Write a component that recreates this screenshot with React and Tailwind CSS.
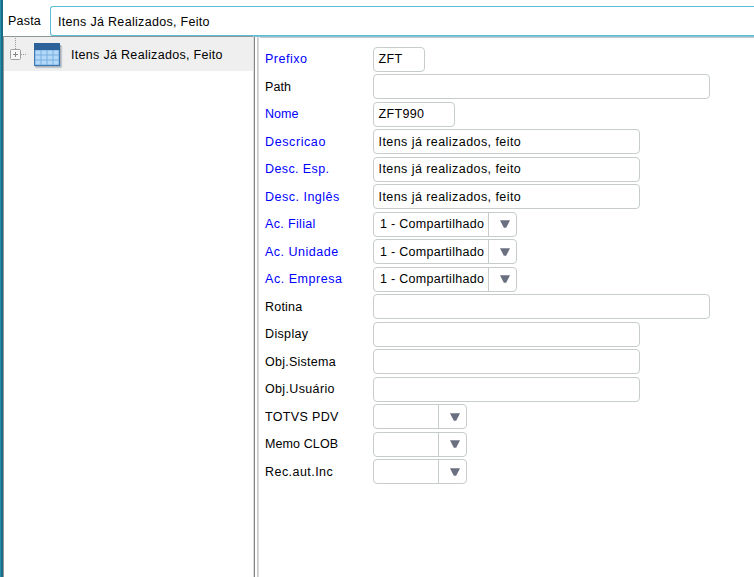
import React from 'react';

const rows = [
  { label: 'Prefixo', blue: true, width: 'w-[52px]', value: 'ZFT', tracking: 'tracking-[0.5px]', valueTracking: 'tracking-[0.4px]' },
  { label: 'Path', width: 'w-[337px]', tracking: 'tracking-[0.1px]' },
  { label: 'Nome', blue: true, width: 'w-[82px]', value: 'ZFT990', tracking: 'tracking-[0px]', valueTracking: 'tracking-[0.35px]' },
  { label: 'Descricao', blue: true, width: 'w-[267px]', value: 'Itens já realizados, feito', tracking: 'tracking-[0.6px]', valueTracking: 'tracking-[0.44px]' },
  { label: 'Desc. Esp.', blue: true, width: 'w-[267px]', value: 'Itens já realizados, feito', tracking: 'tracking-[0.4px]', valueTracking: 'tracking-[0.44px]' },
  { label: 'Desc. Inglês', blue: true, width: 'w-[267px]', value: 'Itens já realizados, feito', tracking: 'tracking-[0.5px]', valueTracking: 'tracking-[0.44px]' },
  { label: 'Ac. Filial', blue: true, width: 'w-[144px]', value: '1 - Compartilhado', select: true, tracking: 'tracking-[0.35px]', valueTracking: 'tracking-[0.28px]' },
  { label: 'Ac. Unidade', blue: true, width: 'w-[144px]', value: '1 - Compartilhado', select: true, tracking: 'tracking-[0.5px]', valueTracking: 'tracking-[0.28px]' },
  { label: 'Ac. Empresa', blue: true, width: 'w-[144px]', value: '1 - Compartilhado', select: true, tracking: 'tracking-[0.55px]', valueTracking: 'tracking-[0.28px]' },
  { label: 'Rotina', width: 'w-[337px]', tracking: 'tracking-[0.2px]' },
  { label: 'Display', width: 'w-[267px]', tracking: 'tracking-[0.35px]' },
  { label: 'Obj.Sistema', width: 'w-[267px]', tracking: 'tracking-[0.25px]' },
  { label: 'Obj.Usuário', width: 'w-[267px]', tracking: 'tracking-[0.35px]' },
  { label: 'TOTVS PDV', width: 'w-[94px]', select: true, tracking: 'tracking-[0.35px]' },
  { label: 'Memo CLOB', width: 'w-[94px]', select: true, tracking: 'tracking-[0.1px]' },
  { label: 'Rec.aut.Inc', width: 'w-[94px]', select: true, tracking: 'tracking-[0.45px]' },
];

function TableIcon() {
  return (
    <svg width="30" height="28" viewBox="0 0 30 28" className="block shrink-0">
      <rect x="1" y="4" width="27.5" height="23.5" rx="2" fill="#dfe1e4" />
      <rect x="1" y="4" width="26.5" height="22.5" rx="1" fill="#a9b1bb" />
      <rect x="0" y="2" width="26" height="23" fill="#3f78ae" />
      <rect x="0" y="2" width="26" height="7" fill="#2c6299" />
      <rect x="1" y="9" width="24" height="15" fill="#79afe0" />
      <g fill="#b4d8f7">
        {[9.5, 14.5, 19.5].map((y) =>
          [1.5, 7.5, 13.5, 19.5].map((x) => (
            <rect key={`${x}-${y}`} x={x} y={y} width="5" height="4" />
          ))
        )}
      </g>
    </svg>
  );
}

function Expander() {
  return (
    <svg width="22" height="33" viewBox="0 0 22 33" className="shrink-0">
      <path d="M6.5 0V11M12 16.5H18" stroke="#999999" strokeDasharray="1 1" fill="none" />
      <rect x="1.5" y="11.5" width="10" height="10" rx="1" fill="#f8f8f8" stroke="#a0a0a0" />
      <path d="M4 16.5H9M6.5 14V19" stroke="#888888" fill="none" />
    </svg>
  );
}

function Field({ row }) {
  if (row.select) {
    return (
      <div className={`flex h-[25px] overflow-hidden rounded-[4px] border border-[#c6cccc] bg-white ${row.width}`}>
        <div className={`flex min-w-0 flex-1 items-center pl-[6.5px] whitespace-nowrap ${row.valueTracking || ''}`}>{row.value}</div>
        <div className="flex w-[28px] shrink-0 items-center justify-center border-l border-[#c6cccc] pl-[5px]">
          <svg width="10" height="8" viewBox="0 0 10 8" className="shrink-0">
            <path d="M0 0.3H10L6.2 7.7H3.8Z" fill="#6b7080" />
          </svg>
        </div>
      </div>
    );
  }
  return (
    <div className={`flex h-[25px] items-center rounded-[4px] border border-[#c6cccc] bg-white pl-[5px] whitespace-nowrap ${row.width} ${row.valueTracking || ''}`}>
      {row.value}
    </div>
  );
}

export default function App() {
  return (
    <div className="flex h-[577px] w-[754px] overflow-hidden bg-white font-['Liberation_Sans',Arial,sans-serif] text-[12.5px] leading-[16px] tracking-[0.31px] text-black">
      <div className="w-[3px] shrink-0 border-l border-[#2590ab] bg-[#1b6c87]" />
      <div className="flex min-w-0 flex-1 flex-col">
        <header className="flex h-[36px] shrink-0 pt-[6px]">
          <div className="w-[47px] shrink-0 pt-[7px] pl-[5px] tracking-[0.2px]">Pasta</div>
          <div className="flex h-[30px] flex-1 items-center rounded-l-[3px] border border-r-0 border-[#5bbdd6] pt-px pl-[7px]">
            Itens Já Realizados, Feito
          </div>
        </header>
        <main className="flex min-h-0 flex-1 border-l border-[#999999]">
          <aside className="w-[249px] shrink-0 border-t border-[#8f9698]">
            <div className="flex h-[34px] items-center bg-[#efefef] pt-px pl-[5px]">
              <Expander />
              <div className="ml-[3px] h-[28px]"><TableIcon /></div>
              <span className="ml-[7px] whitespace-nowrap">Itens Já Realizados, Feito</span>
            </div>
          </aside>
          <div className="flex w-[7px] shrink-0 border-t border-l border-t-[#7cc0d2] border-l-[#dddddd]">
            <div className="w-px bg-[#858585]" />
            <div className="ml-[2px] w-[2px] border-l border-[#cccccc] bg-[#d8d8d8]" />
          </div>
          <div className="min-w-0 flex-1 border-t border-[#7cc0d2]">
            <section className="flex flex-col gap-[2.5px] border-t border-[#cccccc] pt-[8.5px] pl-[5px]">
              {rows.map((row) => (
                <div key={row.label} className="flex h-[25px] items-center">
                  <div className={`w-[107.5px] shrink-0 whitespace-nowrap ${row.tracking} ${row.blue ? 'text-[#0000ff]' : 'text-black'}`}>
                    {row.label}
                  </div>
                  <Field row={row} />
                </div>
              ))}
            </section>
          </div>
        </main>
      </div>
    </div>
  );
}
